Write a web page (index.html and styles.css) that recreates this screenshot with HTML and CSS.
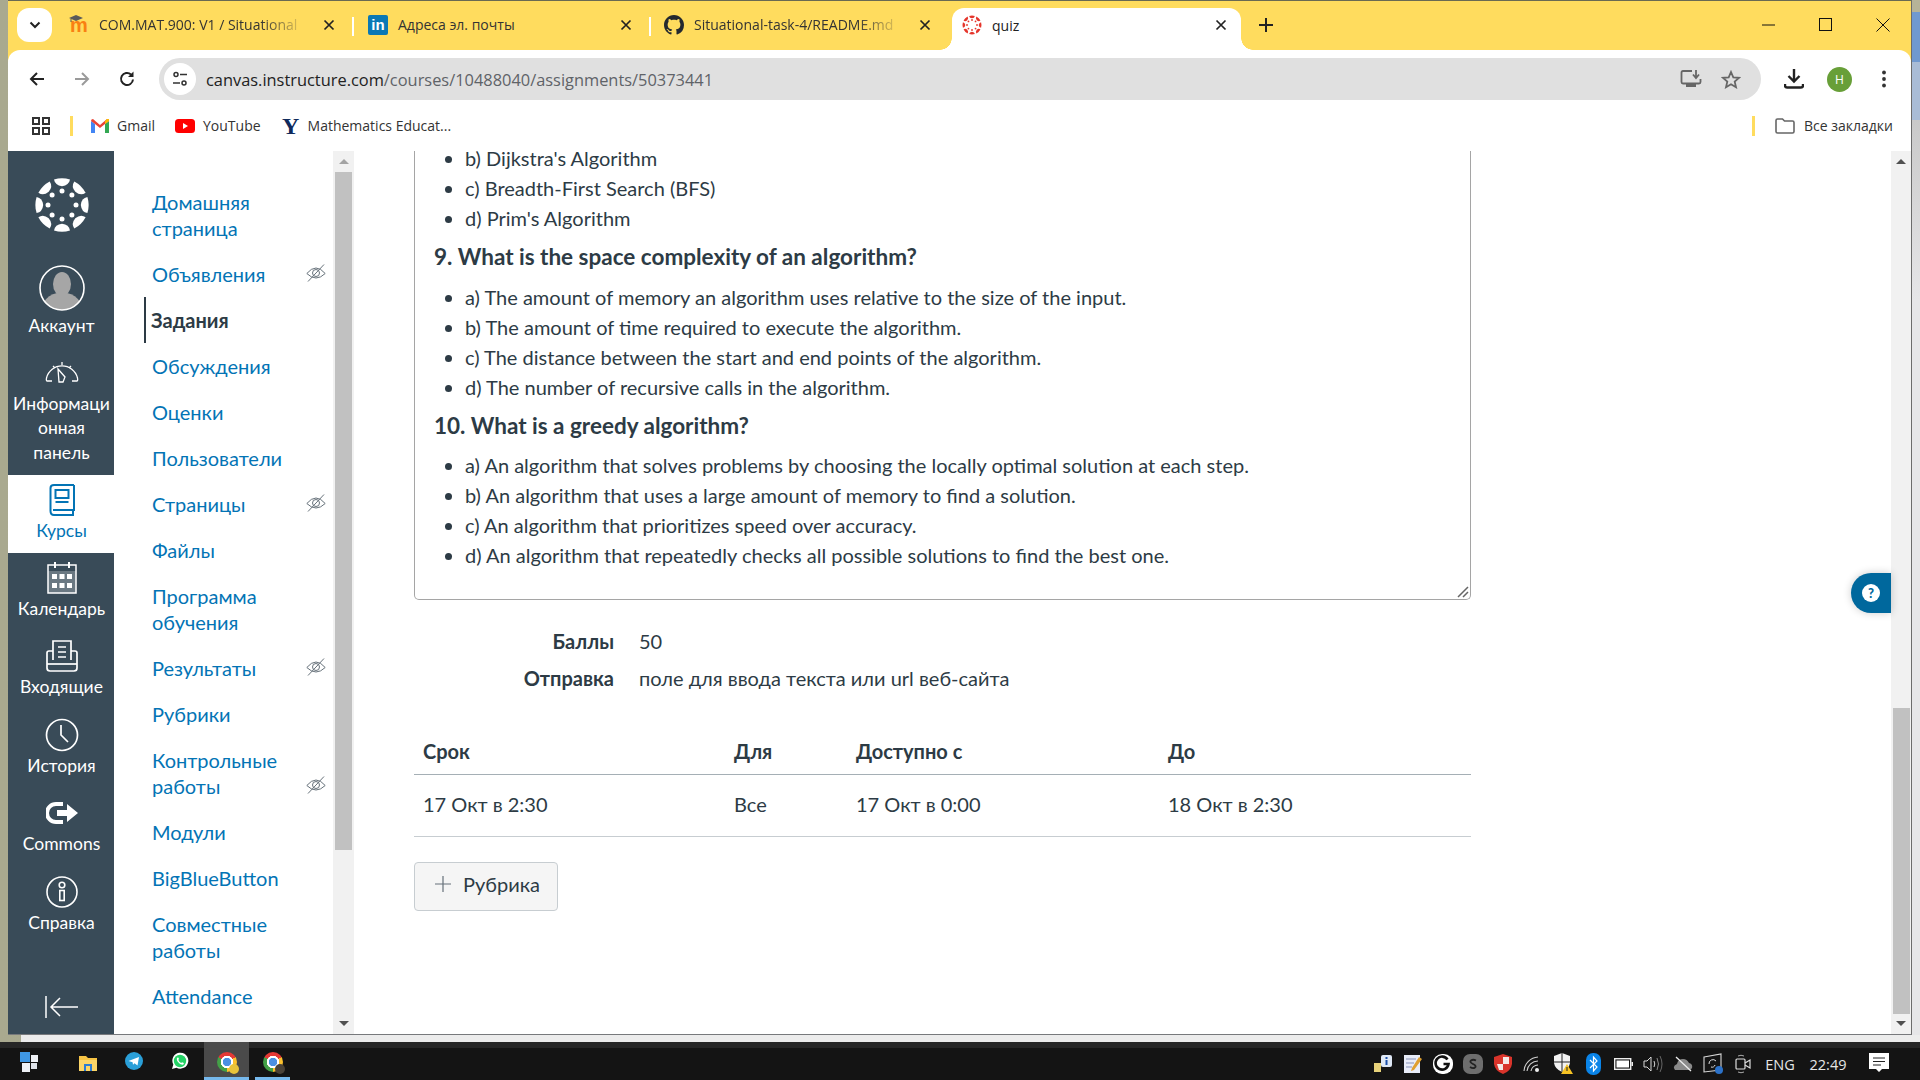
FILE: index.html
```html
<!DOCTYPE html>
<html lang="ru">
<head>
  <meta charset="UTF-8">
  <title>quiz</title>
  <link rel="stylesheet" href="styles.css">
</head>
<body>
  <svg class="defs" width="0" height="0">
    <symbol id="canvas-logo" viewBox="-28 -28 56 56">
      <g id="wedges" fill="currentColor">
        <path id="w" d="M-8-25.4A27 27 0 0 1 8-25.4Q7-19.500 0-18.800Q-7-19.500-8-25.400Z"/>
        <use href="#w" transform="rotate(45)"/><use href="#w" transform="rotate(90)"/><use href="#w" transform="rotate(135)"/>
        <use href="#w" transform="rotate(180)"/><use href="#w" transform="rotate(225)"/><use href="#w" transform="rotate(270)"/><use href="#w" transform="rotate(315)"/>
      </g>
      <g fill="currentColor">
        <circle cx="0" cy="-14" r="2.500"/><circle cx="9.900" cy="-9.900" r="2.500"/><circle cx="14" cy="0" r="2.500"/><circle cx="9.900" cy="9.900" r="2.500"/>
        <circle cx="0" cy="14" r="2.500"/><circle cx="-9.900" cy="9.900" r="2.500"/><circle cx="-14" cy="0" r="2.500"/><circle cx="-9.900" cy="-9.900" r="2.500"/>
      </g>
    </symbol>
    <symbol id="eye-off" viewBox="0 0 20 18">
      <g fill="none" stroke="#66717a" stroke-width="1">
        <path d="M.8 9.500Q10-1.500 19.200 9.500Q10 18.500.8 9.500Z"/>
        <circle cx="10" cy="9" r="3.500"/>
        <path d="M2 17.500 18 .5"/>
      </g>
    </symbol>
    <symbol id="close-x" viewBox="0 0 12 12">
      <path d="M1.500 1.500 10.500 10.500M10.500 1.500 1.500 10.500" fill="none" stroke="currentColor" stroke-width="1.700"/>
    </symbol>
  </svg>

  <div class="top">
    <div class="window">
      <!-- Tabs -->
      <div class="tabstrip">
        <div class="tab-search">
          <svg width="12" height="8" viewBox="0 0 12 8"><path d="M1.500 1.500 6 6 10.500 1.500" fill="none" stroke="#222" stroke-width="2"/></svg>
        </div>
        <div class="tab tab-moodle">
          <span class="favicon moodle">m
            <svg class="moodle-hat" width="14" height="8" viewBox="0 0 14 8"><path d="M0 3 7 0 14 3 7 6Z" fill="#5a5a5a"/><path d="M2 4V7" stroke="#5a5a5a"/></svg>
          </span>
          <span class="tab-title">COM.MAT.900: V1 / Situational</span>
          <svg class="tab-close" width="12" height="12"><use href="#close-x"/></svg>
        </div>
        <div class="tab-sep"></div>
        <div class="tab tab-linkedin">
          <span class="favicon linkedin">in</span>
          <span class="tab-title no-fade">Адреса эл. почты</span>
          <svg class="tab-close" width="12" height="12"><use href="#close-x"/></svg>
        </div>
        <div class="tab-sep"></div>
        <div class="tab tab-github">
          <svg class="favicon" viewBox="0 0 16 16" width="20" height="20"><path fill="#24292f" d="M8 0C3.580 0 0 3.580 0 8c0 3.540 2.290 6.530 5.470 7.590.4.070.55-.17.55-.38 0-.19-.01-.82-.01-1.490-2.010.37-2.530-.49-2.690-.94-.09-.23-.48-.94-.82-1.130-.28-.15-.68-.52-.01-.53.63-.01 1.080.58 1.230.82.72 1.210 1.870.87 2.330.66.070-.52.28-.87.51-1.070-1.780-.2-3.640-.89-3.640-3.950 0-.87.31-1.590.82-2.150-.08-.2-.36-1.020.08-2.120 0 0 .67-.21 2.200.82.64-.18 1.320-.27 2-.27s1.360.09 2 .27c1.530-1.040 2.200-.82 2.200-.82.44 1.100.16 1.920.08 2.120.51.56.82 1.270.82 2.150 0 3.070-1.870 3.750-3.650 3.950.29.25.54.73.54 1.480 0 1.070-.01 1.930-.01 2.200 0 .21.15.46.55.38A8.010 8.010 0 0 0 16 8c0-4.420-3.580-8-8-8z"/></svg>
          <span class="tab-title">Situational-task-4/README.md</span>
          <svg class="tab-close" width="12" height="12"><use href="#close-x"/></svg>
        </div>
        <div class="tab tab-active">
          <svg class="favicon canvas-red" width="20" height="20"><use href="#canvas-logo"/></svg>
          <span class="tab-title no-fade">quiz</span>
          <svg class="tab-close" width="12" height="12"><use href="#close-x"/></svg>
        </div>
        <svg class="new-tab" width="14" height="14" viewBox="0 0 14 14"><path d="M7 0V14M0 7H14" stroke="#222" stroke-width="2"/></svg>
        <div class="win-controls">
          <svg width="14" height="14" viewBox="0 0 14 14"><path d="M0 7H13" stroke="#111" stroke-width="1"/></svg>
          <svg width="14" height="14" viewBox="0 0 14 14"><rect x=".5" y=".5" width="12" height="12" fill="none" stroke="#111"/></svg>
          <svg width="14" height="14" viewBox="0 0 14 14"><path d="M.5.5 13.500 13.500M13.500.5 .5 13.500" stroke="#111" stroke-width="1"/></svg>
        </div>
      </div>

      <!-- Address bar -->
      <div class="toolbar">
        <div class="nav-btns">
          <svg width="18" height="18" viewBox="0 0 18 18"><path d="M16 9H3M9 3 3 9 9 15" fill="none" stroke="#222" stroke-width="2"/></svg>
          <svg width="18" height="18" viewBox="0 0 18 18"><path d="M2 9H15M9 3 15 9 9 15" fill="none" stroke="#9a9a9a" stroke-width="2"/></svg>
          <svg width="18" height="18" viewBox="0 0 18 18"><path d="M15 9.500A6 6 0 1 1 13 4.500" fill="none" stroke="#222" stroke-width="2"/><path d="M15.500 1.500V7H10Z" fill="#222"/></svg>
        </div>
        <div class="omnibox">
          <span class="site-chip">
            <svg width="16" height="16" viewBox="0 0 16 16"><g fill="none" stroke="#333" stroke-width="1.500"><circle cx="4" cy="3.500" r="2"/><path d="M8 3.500H15M1 12H8"/><circle cx="12" cy="12" r="2"/></g></svg>
          </span>
          <span class="url">canvas.instructure.com<span class="url-path">/courses/10488040/assignments/50373441</span></span>
          <svg class="omni-icon" width="22" height="20" viewBox="0 0 22 20"><g fill="none" stroke="#666" stroke-width="1.800"><path d="M12 2H3Q1.500 2 1.500 3.500V13Q1.500 14.500 3 14.500H19Q20.500 14.500 20.500 13V10"/></g><path d="M6 15H16V18H6Z" fill="#666"/><path d="M16 1V8M13 5.500 16 9 19 5.500" fill="none" stroke="#666" stroke-width="1.800"/></svg>
          <svg class="omni-icon" width="20" height="19" viewBox="0 0 20 19"><path d="M10 2 12.300 7.300 18 7.800 13.700 11.600 15 17.200 10 14.200 5 17.200 6.300 11.600 2 7.800 7.700 7.300Z" fill="none" stroke="#666" stroke-width="1.800"/></svg>
        </div>
        <div class="tool-btns">
          <svg width="20" height="20" viewBox="0 0 20 20"><path d="M10 0V12M4.500 7 10 12.500 15.500 7" fill="none" stroke="#222" stroke-width="2.400"/><path d="M1 15V16.500Q1 18.500 3 18.500H17Q19 18.500 19 16.500V15" fill="none" stroke="#222" stroke-width="2.400"/></svg>
          <span class="profile">H</span>
          <svg class="menu-dots" width="6" height="18" viewBox="0 0 6 18"><circle cx="3" cy="2.500" r="1.900" fill="#333"/><circle cx="3" cy="9" r="1.900" fill="#333"/><circle cx="3" cy="15.500" r="1.900" fill="#333"/></svg>
        </div>
      </div>

      <!-- Bookmarks -->
      <div class="bookmarks">
        <svg class="apps" width="18" height="18" viewBox="0 0 18 18"><g fill="none" stroke="#333" stroke-width="2"><rect x="1" y="1" width="6" height="6"/><rect x="11" y="1" width="6" height="6"/><rect x="1" y="11" width="6" height="6"/><rect x="11" y="11" width="6" height="6"/></g></svg>
        <span class="bm-sep"></span>
        <span class="bm bm-gmail">
          <svg width="18" height="14" viewBox="0 0 18 14"><path d="M0 2V14H4V5Z" fill="#4285f4"/><path d="M14 5V14H18V2Z" fill="#34a853"/><path d="M0 2Q0 0 2 0L9 6 16 0Q18 0 18 2L14 5 9 9 4 5Z" fill="#ea4335"/><path d="M14 5 18 2V0H16L14 2Z" fill="#fbbc04"/></svg>
          Gmail
        </span>
        <span class="bm bm-youtube">
          <svg width="20" height="14" viewBox="0 0 20 14"><rect width="20" height="14" rx="3.500" fill="#f00"/><path d="M8 4V10L13 7Z" fill="#fff"/></svg>
          YouTube
        </span>
        <span class="bm bm-yale">
          <span class="yale-y">Y</span>
          Mathematics Educat...
        </span>
        <span class="bm-spacer"></span>
        <span class="bm-sep"></span>
        <span class="bm bm-all">
          <svg width="20" height="16" viewBox="0 0 20 16"><path d="M1 2.500Q1 1 2.500 1H7.500L9.500 3H17.500Q19 3 19 4.500V13.500Q19 15 17.500 15H2.500Q1 15 1 13.500Z" fill="none" stroke="#666" stroke-width="1.600"/></svg>
          Все закладки
        </span>
      </div>

      <!-- Canvas page -->
      <div class="app">
        <nav class="global-nav">
          <div class="gn-logo"><svg width="56" height="56"><use href="#canvas-logo"/></svg></div>
          <a class="gn-item gn-account">
            <span class="avatar">
              <svg width="46" height="46" viewBox="0 0 46 46"><ellipse cx="23" cy="19" rx="9" ry="12" fill="#a6a6a6"/><path d="M5 37Q9 30 18 28H28Q37 30 41 37 34 45 23 45 12 45 5 37Z" fill="#a6a6a6"/><circle cx="23" cy="23" r="22" fill="none" stroke="#fff" stroke-width="1.600"/></svg>
            </span>
            <span>Аккаунт</span>
          </a>
          <a class="gn-item">
            <span class="gn-icon"><svg width="34" height="26" viewBox="0 2 34 26"><g fill="none" stroke="currentColor" stroke-width="1.300"><path d="M7 23H2Q1 23 1.500 20A16 16 0 0 1 32.500 20Q33 23 32 23H27"/><path d="M13 11 20 19 18 24H14Z"/><path d="M17 4V7M8 8 10 10M26 8 24 10"/></g></svg></span>
            <span>Информаци<br>онная<br>панель</span>
          </a>
          <a class="gn-item gn-active">
            <span class="gn-icon"><svg width="26" height="32" viewBox="0 0 26 32"><g fill="none" stroke="currentColor" stroke-width="2"><path d="M25 1H5Q1.500 1 1.500 4V27Q1.500 31 5 31H24V26M4 26H25V1"/><rect x="6.500" y="6" width="13" height="8"/><path d="M6.500 18H19.500"/></g></svg></span>
            <span>Курсы</span>
          </a>
          <a class="gn-item">
            <span class="gn-icon"><svg width="30" height="33" viewBox="0 0 30 33"><path d="M1 4H29V32H1Z" fill="none" stroke="currentColor" stroke-width="1.500"/><path d="M1 10H29V32H1Z" fill="currentColor" fill-opacity=".25"/><path d="M8 1V7M22 1V7" stroke="currentColor" stroke-width="2"/><g fill="currentColor"><rect x="5" y="13" width="5" height="5"/><rect x="12.500" y="13" width="5" height="5"/><rect x="20" y="13" width="5" height="5"/><rect x="5" y="22" width="5" height="5"/><rect x="12.500" y="22" width="5" height="5"/><rect x="20" y="22" width="5" height="5"/></g></svg></span>
            <span>Календарь</span>
          </a>
          <a class="gn-item">
            <span class="gn-icon"><svg width="32" height="32" viewBox="0 0 32 32"><g fill="none" stroke="currentColor" stroke-width="1.700"><path d="M7 20V1H25V20"/><path d="M12 7H20M12 12H20M12 17H20"/><path d="M7 11H3Q1 11 1 13V28Q1 31 4 31H28Q31 31 31 28V13Q31 11 29 11H25"/><path d="M1 24H31"/></g></svg></span>
            <span>Входящие</span>
          </a>
          <a class="gn-item">
            <span class="gn-icon"><svg width="34" height="34" viewBox="0 0 34 34"><g fill="none" stroke="currentColor" stroke-width="1.700"><circle cx="17" cy="17" r="15.500"/><path d="M16 7V17L23 24"/></g></svg></span>
            <span>История</span>
          </a>
          <a class="gn-item">
            <span class="gn-icon"><svg width="32" height="24" viewBox="0 0 32 24"><path d="M17 5V1H10A11 11 0 0 0 10 23H17V19H10A7 7 0 0 1 10 5Z" fill="currentColor"/><path d="M21 3 32 12 21 21V15H11V9H21Z" fill="currentColor"/></svg></span>
            <span>Commons</span>
          </a>
          <a class="gn-item">
            <span class="gn-icon"><svg width="32" height="32" viewBox="0 0 32 32"><g fill="none" stroke="currentColor" stroke-width="1.600"><circle cx="16" cy="16" r="15"/><circle cx="16" cy="9" r="2.800"/><rect x="13.800" y="14.500" width="4.400" height="10"/></g></svg></span>
            <span>Справка</span>
          </a>
          <div class="gn-collapse">
            <svg width="34" height="24" viewBox="0 0 34 24"><path d="M1 1V23" stroke="currentColor" stroke-width="1.500"/><path d="M33 12H6M15 3 6 12 15 21" fill="none" stroke="currentColor" stroke-width="1.500"/></svg>
          </div>
        </nav>

        <aside class="course-nav">
          <ul class="course-links">
            <li><a>Домашняя<br>страница</a></li>
            <li><a>Объявления</a><svg class="eye" width="20" height="18"><use href="#eye-off"/></svg></li>
            <li class="current"><a>Задания</a></li>
            <li><a>Обсуждения</a></li>
            <li><a>Оценки</a></li>
            <li><a>Пользователи</a></li>
            <li><a>Страницы</a><svg class="eye" width="20" height="18"><use href="#eye-off"/></svg></li>
            <li><a>Файлы</a></li>
            <li><a>Программа<br>обучения</a></li>
            <li><a>Результаты</a><svg class="eye" width="20" height="18"><use href="#eye-off"/></svg></li>
            <li><a>Рубрики</a></li>
            <li><a>Контрольные<br>работы</a><svg class="eye" width="20" height="18"><use href="#eye-off"/></svg></li>
            <li><a>Модули</a></li>
            <li><a>BigBlueButton</a></li>
            <li><a>Совместные<br>работы</a></li>
            <li><a>Attendance</a></li>
          </ul>
          <div class="scrollbar scrollbar-nav">
            <span class="arrow-up"></span>
            <span class="thumb"></span>
            <span class="arrow-down"></span>
          </div>
        </aside>

        <main class="content">
          <div class="description">
            <ul class="answers first">
              <li>b) Dijkstra's Algorithm</li>
              <li>c) Breadth-First Search (BFS)</li>
              <li>d) Prim's Algorithm</li>
            </ul>
            <h3>9. What is the space complexity of an algorithm?</h3>
            <ul class="answers">
              <li>a) The amount of memory an algorithm uses relative to the size of the input.</li>
              <li>b) The amount of time required to execute the algorithm.</li>
              <li>c) The distance between the start and end points of the algorithm.</li>
              <li>d) The number of recursive calls in the algorithm.</li>
            </ul>
            <h3 class="q10">10. What is a greedy algorithm?</h3>
            <ul class="answers">
              <li>a) An algorithm that solves problems by choosing the locally optimal solution at each step.</li>
              <li>b) An algorithm that uses a large amount of memory to find a solution.</li>
              <li>c) An algorithm that prioritizes speed over accuracy.</li>
              <li>d) An algorithm that repeatedly checks all possible solutions to find the best one.</li>
            </ul>
            <svg class="grip" width="12" height="12" viewBox="0 0 12 12"><path d="M1 11 11 1M6 11 11 6" stroke="#666" stroke-width="1.500"/></svg>
          </div>

          <dl class="fields">
            <dt>Баллы</dt><dd>50</dd>
            <dt>Отправка</dt><dd>поле для ввода текста или url веб-сайта</dd>
          </dl>

          <table class="dates">
            <thead>
              <tr><th class="c1">Срок</th><th class="c2">Для</th><th class="c3">Доступно с</th><th>До</th></tr>
            </thead>
            <tbody>
              <tr><td>17 Окт в 2:30</td><td>Все</td><td>17 Окт в 0:00</td><td>18 Окт в 2:30</td></tr>
            </tbody>
          </table>

          <button class="rubric-btn">
            <svg width="16" height="16" viewBox="0 0 16 16"><path d="M8 0V16M0 8H16" stroke="#66717a" stroke-width="1.200"/></svg>
            Рубрика
          </button>

          <div class="help-tab"><span class="help-dot">?</span></div>
        </main>

        <div class="scrollbar scrollbar-main">
          <span class="arrow-up"></span>
          <span class="thumb"></span>
          <span class="arrow-down"></span>
        </div>
      </div>
    </div>
    <div class="edge"></div>
  </div>

  <div class="behind"></div>

  <!-- Windows taskbar -->
  <footer class="taskbar">
    <svg class="start" width="20" height="20" viewBox="0 0 20 20"><rect width="10" height="10" fill="#3f97e4"/><rect x="11" y="3" width="7" height="7" fill="#eef1f6"/><rect x="2" y="11" width="8" height="9" fill="#eef1f6"/><rect x="11" y="11" width="6" height="6" fill="#dfe3ea"/></svg>
    <svg class="tb-explorer" width="18" height="16" viewBox="0 0 18 16"><path d="M0 1H7L9 3H18V16H0Z" fill="#f6c445"/><path d="M0 5H18V16H0Z" fill="#fbd568"/><path d="M5 9H13V16H11V11H7V16H5Z" fill="#2b7cd3"/></svg>
    <svg class="tb-telegram" width="18" height="18" viewBox="0 0 18 18"><circle cx="9" cy="9" r="9" fill="#2a9fd8"/><path d="M3.500 9 14 5 12.500 13.500 9.500 11.300 8 12.800 7.600 10.300Z" fill="#fff"/></svg>
    <svg class="tb-whatsapp" width="18" height="18" viewBox="0 0 18 18"><path d="M1 17 2.300 12.500A8 8 0 1 1 5.500 15.700Z" fill="#fff"/><circle cx="9" cy="9" r="6.200" fill="#25d366"/><path d="M6.500 5.500Q5 7 6.800 9.700T11.500 12.700Q13 12.500 12.800 11L11 10.200 10.200 11Q8 10 7.300 7.800L8 7 7.300 5.500Z" fill="#fff"/></svg>
    <span class="tb-app tb-app-active"><span class="chrome"><span class="chrome-badge yellow"></span></span></span>
    <span class="tb-app tb-app-open"><span class="chrome"><span class="chrome-badge dark"></span></span></span>
    <span class="tb-spacer"></span>
    <div class="tray">
      <svg width="20" height="20" viewBox="0 0 20 20"><path d="M1 9H8V18H1Z" fill="#e8d27a"/><rect x="8" y="1" width="11" height="12" rx="2" fill="#dfe8f5"/><rect x="12.500" y="3" width="2" height="2" fill="#1b4fa8"/><rect x="12.500" y="6" width="2" height="5" fill="#1b4fa8"/></svg>
      <svg width="20" height="20" viewBox="0 0 20 20"><rect x="1" y="1" width="16" height="18" fill="#e8ecf8"/><path d="M3 5H13M3 9H11M3 13H9" stroke="#8792b8"/><path d="M16 3 19 5 11 16 8 17 9 14Z" fill="#e0a030"/></svg>
      <svg width="20" height="20" viewBox="0 0 20 20"><rect width="20" height="20" rx="9" fill="#fff"/><path d="M14.500 5.500A6.500 6.500 0 1 0 15.500 10H10.500" fill="none" stroke="#111" stroke-width="2.600"/></svg>
      <svg width="20" height="22" viewBox="0 0 20 22"><rect y="1" width="20" height="20" rx="7" fill="#6e6e6e"/><path d="M13 7.500Q10 6 8 7.500T10 11 12 14.500 7 14" fill="none" stroke="#222" stroke-width="1.800"/></svg>
      <svg width="18" height="20" viewBox="0 0 18 20"><path d="M0 3 9 0 18 3V10Q17 17 9 20 1 17 0 10Z" fill="#d9342b"/><path d="M9 3H15V10H9ZM3 10H9V16H5Z" fill="#f4e9e6"/></svg>
      <svg width="20" height="18" viewBox="0 0 20 18"><g fill="none" stroke="#cfcfcf" stroke-width="1.100"><path d="M1 16A15 15 0 0 1 15 2"/><path d="M4 16A11 11 0 0 1 15 6"/><path d="M8 16A7 7 0 0 1 15 10"/></g><circle cx="14" cy="15" r="2" fill="#eee"/></svg>
      <svg width="20" height="22" viewBox="0 0 20 22"><path d="M1 3 9 0 17 3V10Q16 16 9 19 2 16 1 10Z" fill="#f2f2f2"/><path d="M9 0V19M1 9H17" stroke="#222"/><path d="M14 11 20 21H8Z" fill="#f6c324"/><path d="M14 14V18" stroke="#222"/></svg>
      <svg width="15" height="22" viewBox="0 0 15 22"><rect width="15" height="22" rx="7" fill="#0a84e8"/><path d="M4 7 11 14 7.500 18V4L11 8 4 15" fill="none" stroke="#fff" stroke-width="1.200"/></svg>
      <svg width="19" height="12" viewBox="0 0 19 12"><rect x=".7" y=".7" width="16" height="10.600" fill="none" stroke="#eee" stroke-width="1.400"/><rect x="2.500" y="2.500" width="12.500" height="7" fill="#fff"/><rect x="17.500" y="4" width="1.500" height="4" fill="#eee"/></svg>
      <svg width="20" height="18" viewBox="0 0 20 18"><g fill="none" stroke="#d8d8d8" stroke-width="1"><path d="M1 6H4L8 2V16L4 12H1Z"/><path d="M11 6Q12.500 9 11 12"/><path d="M14 3Q17 9 14 15" stroke="#8a8a8a"/><path d="M17 1Q21 9 17 17" stroke="#666"/></g></svg>
      <svg width="20" height="16" viewBox="0 0 20 16"><path d="M2 14Q-1 10 4 8 5 3 10 3 14 3 16 7 20 8 19 12 18 14 16 14Z" fill="#8a8a8a"/><path d="M3 1 18 15" stroke="#eee" stroke-width="1.300"/></svg>
      <svg width="22" height="22" viewBox="0 0 22 22"><path d="M2 4 19 1V17L2 19Z" fill="none" stroke="#d8d8d8" stroke-width="1.100"/><path d="M7 11A4 4 0 0 1 14 8M13 12A3 3 0 0 1 9 14" fill="none" stroke="#ddd"/><circle cx="17" cy="17" r="4" fill="#2c72c9"/></svg>
      <svg width="16" height="20" viewBox="0 0 16 20"><rect x="1" y="5" width="9" height="10" rx="1" fill="none" stroke="#ddd" stroke-width="1.200"/><path d="M10 9 15 6V14L10 11" fill="none" stroke="#ddd" stroke-width="1.200"/><path d="M3 2Q6 .5 9 2M3 18Q6 19.500 9 18" fill="none" stroke="#aaa"/></svg>
      <span class="tray-text">ENG</span>
      <span class="tray-text">22:49</span>
      <svg width="20" height="22" viewBox="0 0 20 22"><path d="M0 0H20V16H13L10 19 7 16H0Z" fill="#fff"/><path d="M4 5H16M4 8.500H16M4 12H12" stroke="#222"/></svg>
    </div>
  </footer>
</body>
</html>
```

FILE: styles.css
```css
* {
  box-sizing: border-box;
}

html, body {
  margin: 0;
  height: 100%;
  overflow: hidden;
}

body {
  width: 1920px;
  height: 1080px;
  background: linear-gradient(90deg, #a9a98f, #b5b498 50%, #9fa085);
  font-family: Lato, "Noto Sans", sans-serif;
  color: #2d3b45;
  display: flex;
  flex-direction: column;
}

.defs {
  position: absolute;
}

.top {
  display: flex;
  height: 1035px;
}

.window {
  width: 1904px;
  margin-left: 8px;
  height: 1035px;
  display: flex;
  flex-direction: column;
  background: #ffdc5e;
  border-top: 1px solid #6a6a52;
  border-right: 1px solid #6c6c6c;
  border-bottom: 1px solid #77797c;
}

.edge {
  flex: 1;
  background: linear-gradient(180deg, #b6b398 0, #b6b398 12px, #7099cf 12px, #7099cf 62px, #a9bcd6 62px, #a9bcd6 120px, #c9c9c9 120px, #e6e6e8 300px);
}

/* Tabs */
.tabstrip {
  height: 49px;
  flex: none;
  background: #ffdc5e;
  display: flex;
  align-items: flex-end;
  padding-left: 9px;
  font-family: "Open Sans", sans-serif;
  font-size: 14px;
  color: #333;
}

.tab-search {
  width: 35px;
  height: 34px;
  margin-bottom: 8px;
  margin-right: 8px;
  background: #fff;
  border-radius: 12px;
  display: flex;
  align-items: center;
  justify-content: center;
}

.tab {
  height: 49px;
  display: flex;
  align-items: center;
  padding-bottom: 2px;
  flex: none;
}

.tab-moodle {
  width: 292px;
  padding-left: 9px;
  padding-right: 17px;
}

.tab-linkedin {
  width: 295px;
  padding-left: 14px;
  padding-right: 17px;
}

.tab-github {
  width: 301px;
  padding-left: 13px;
  padding-right: 21px;
}

.tab-active {
  width: 289px;
  height: 42px;
  padding: 0 14px 8px 10px;
  background: #fff;
  border-radius: 12px 12px 0 0;
  color: #222;
  position: relative;
}

/* curved feet of the active tab */
.tab-active::before,
.tab-active::after {
  content: "";
  position: absolute;
  bottom: 0;
  width: 12px;
  height: 12px;
}

.tab-active::before {
  left: -12px;
  background: radial-gradient(circle at 0 0, transparent 11.500px, #fff 12px);
}

.tab-active::after {
  right: -12px;
  background: radial-gradient(circle at 100% 0, transparent 11.500px, #fff 12px);
}

.tab-sep {
  width: 2px;
  height: 19px;
  margin-bottom: 14px;
  background: #fff;
  flex: none;
}

.favicon {
  width: 20px;
  height: 20px;
  flex: none;
}

.moodle {
  color: #f98012;
  font-family: "Liberation Sans", sans-serif;
  font-size: 20px;
  font-weight: 700;
  line-height: 20px;
  text-align: center;
  position: relative;
}

.moodle-hat {
  position: absolute;
  left: 0;
  top: 0;
}

.linkedin {
  background: #0a78b5;
  border-radius: 2px;
  color: #fff;
  font-family: "Liberation Sans", sans-serif;
  font-size: 15px;
  font-weight: 700;
  line-height: 20px;
  text-align: center;
}

.canvas-red {
  color: #e5352b;
}

.tab-title {
  flex: 1;
  min-width: 0;
  margin-left: 10px;
  white-space: nowrap;
  -webkit-mask-image: linear-gradient(90deg, #000 72%, transparent 93%);
  mask-image: linear-gradient(90deg, #000 72%, transparent 93%);
}

.no-fade {
  -webkit-mask-image: none;
  mask-image: none;
}

.tab-close {
  flex: none;
  color: #222;
}

.new-tab {
  margin: 0 0 18px 18px;
}

.win-controls {
  margin-left: auto;
  height: 49px;
  display: flex;
  align-items: center;
  gap: 43px;
  padding-right: 21px;
  padding-bottom: 2px;
}

/* Address bar */
.toolbar {
  height: 50px;
  flex: none;
  display: flex;
  align-items: center;
  padding-top: 8px;
  background: #fff;
  border-radius: 12px 12px 0 0;
}

.nav-btns {
  width: 151px;
  padding-left: 20px;
  display: flex;
  gap: 27px;
}

.omnibox {
  width: 1602px;
  height: 42px;
  background: #e0e0e0;
  border-radius: 21px;
  display: flex;
  align-items: center;
  padding: 0 20px 0 5px;
}

.site-chip {
  width: 32px;
  height: 32px;
  border-radius: 50%;
  background: #fff;
  display: flex;
  align-items: center;
  justify-content: center;
  flex: none;
}

.url {
  flex: 1;
  margin-left: 10px;
  font-family: "Open Sans", sans-serif;
  font-size: 16.400px;
  color: #222;
  white-space: nowrap;
}

.url-path {
  color: #5f6368;
}

.omni-icon {
  flex: none;
  margin-left: 19px;
}

.tool-btns {
  flex: 1;
  display: flex;
  align-items: center;
  padding-left: 23px;
}

.profile {
  width: 25px;
  height: 25px;
  margin-left: 23px;
  border-radius: 50%;
  background: #689f38;
  color: #fff;
  font-family: "Open Sans", sans-serif;
  font-size: 12px;
  line-height: 25px;
  text-align: center;
}

.menu-dots {
  margin-left: 29px;
}

/* Bookmarks */
.bookmarks {
  height: 51px;
  flex: none;
  display: flex;
  align-items: center;
  padding: 0 18px 0 24px;
  font-family: "Open Sans", sans-serif;
  font-size: 14px;
  color: #333;
  background: #fff;
}

.bm-sep {
  width: 3px;
  height: 20px;
  margin-left: 20px;
  background: #ffdc5e;
  flex: none;
}

.bm {
  display: flex;
  align-items: center;
  gap: 8px;
  white-space: nowrap;
}

.bm-gmail {
  margin-left: 18px;
}

.bm-youtube {
  margin-left: 20px;
}

.bm-yale {
  margin-left: 21px;
}

.yale-y {
  width: 18px;
  color: #0f2a5c;
  font-family: "Liberation Serif", serif;
  font-size: 24px;
  font-weight: 700;
  line-height: 22px;
  text-align: center;
}

.bm-spacer {
  flex: 1;
}

.bm-all {
  margin-left: 20px;
  gap: 9px;
}

/* Canvas page */
.app {
  flex: 1;
  min-height: 0;
  display: flex;
  overflow: hidden;
  background: #fff;
}

.global-nav {
  width: 106px;
  flex: none;
  padding-left: 1px;
  background: #394b58;
  color: #fff;
  display: flex;
  flex-direction: column;
  font-size: 17.500px;
  line-height: 24.500px;
  text-align: center;
}

.gn-logo {
  height: 105px;
  padding-top: 26px;
}

.gn-item {
  display: block;
  padding: 6px 0 10px;
}

.gn-icon {
  display: flex;
  height: 36px;
  margin-bottom: 2px;
  padding-top: 2px;
  align-items: center;
  justify-content: center;
}

.gn-account {
  padding: 9px 0 9px;
}

.avatar {
  display: block;
  height: 46px;
  margin-bottom: 3px;
}

.gn-active {
  margin-left: -1px;
  padding-left: 1px;
  padding-bottom: 9px;
  background: #fff;
  color: #0374b5;
}

.gn-collapse {
  margin-top: auto;
  padding-bottom: 9px;
}

.course-nav {
  width: 240px;
  flex: none;
  display: flex;
}

.course-links {
  width: 219px;
  margin: 0;
  padding: 28px 0 0 30px;
  list-style: none;
  font-size: 20px;
  line-height: 26px;
  color: #0374b5;
}

.course-links li {
  display: flex;
  justify-content: space-between;
  align-items: flex-end;
  padding: 10px 7px 10px 6px;
  border-left: 2px solid transparent;
}

.course-links .current {
  padding-left: 5px;
  border-left-color: #2d3b45;
  color: #2d3b45;
  font-weight: 700;
}

.eye {
  flex: none;
  margin-bottom: 5px;
}

.scrollbar {
  width: 21px;
  flex: none;
  background: #f1f1f1;
  display: flex;
  flex-direction: column;
  align-items: center;
}

.scrollbar-main {
  width: 20px;
}

.arrow-up,
.arrow-down {
  display: block;
  width: 0;
  height: 0;
  border-left: 5px solid transparent;
  border-right: 5px solid transparent;
}

.arrow-up {
  margin: 8px 0;
  border-bottom: 5px solid #a3a3a3;
}

.arrow-down {
  margin: auto 0 8px;
  border-top: 5px solid #505050;
}

.thumb {
  display: block;
  width: 17px;
  background: #c1c1c1;
}

.scrollbar-nav .thumb {
  height: 678px;
}

.scrollbar-main .thumb {
  margin-top: 536px;
  height: 306px;
}

.scrollbar-main .arrow-up {
  border-bottom-color: #505050;
}

.content {
  flex: 1;
  min-width: 0;
  padding-left: 60px;
  padding-right: 60px;
  position: relative;
  font-size: 20px;
  line-height: 30px;
}

.description {
  width: 1057px;
  height: 449px;
  padding-left: 18px;
  border: 1px solid #a5a5a5;
  border-top: 0;
  border-radius: 0 0 5px 5px;
  position: relative;
  overflow: hidden;
}

.description h3 {
  margin: 9px 0 10px 1px;
  font-size: 22.500px;
  line-height: 30px;
  font-weight: 700;
}

.description .q10 {
  margin-bottom: 9px;
}

.answers {
  margin: 0;
  padding-left: 32px;
}

.first {
  margin-top: -8px;
}

.grip {
  position: absolute;
  right: 1px;
  bottom: 1px;
}

.fields {
  display: grid;
  grid-template-columns: 200px 1fr;
  column-gap: 25px;
  margin: 23px 0 0;
  line-height: 37px;
}

.fields dt {
  font-weight: 700;
  text-align: right;
}

.fields dd {
  margin: 0;
}

.dates {
  width: 1057px;
  margin-top: 33px;
  border-collapse: collapse;
  table-layout: fixed;
}

.dates th {
  height: 44px;
  padding: 0 9px 2px;
  text-align: left;
  font-weight: 700;
  border-bottom: 1px solid #a5afb5;
}

.dates td {
  height: 62px;
  padding: 0 9px 2px;
  border-bottom: 1px solid #c7cdd1;
}

.c1 {
  width: 311px;
}

.c2 {
  width: 122px;
}

.c3 {
  width: 312px;
}

.rubric-btn {
  display: flex;
  align-items: center;
  gap: 12px;
  width: 144px;
  height: 49px;
  margin-top: 25px;
  padding: 0 0 4px 20px;
  background: #f5f5f5;
  border: 1px solid #c7cdd1;
  border-radius: 4px;
  font: inherit;
  color: #2d3b45;
}

.help-tab {
  position: absolute;
  right: 0;
  top: 422px;
  width: 40px;
  height: 40px;
  border-radius: 20px 0 0 20px;
  background: #00689d;
  box-shadow: 0 0 8px rgba(0, 0, 0, 0.2);
  display: flex;
  align-items: center;
  padding-left: 11px;
}

.help-dot {
  width: 18px;
  height: 18px;
  border-radius: 50%;
  background: #fff;
  color: #00689d;
  font-size: 13px;
  font-weight: 900;
  line-height: 18px;
  text-align: center;
}

/* Desktop behind the window */
.behind {
  height: 7px;
  margin-left: 21px;
  background: #ececec;
  flex: none;
}

.taskbar {
  height: 38px;
  flex: none;
  display: flex;
  align-items: flex-end;
  background: linear-gradient(180deg, #262626 0, #262626 6px, #141414 6px);
}

.taskbar svg {
  flex: none;
}

.start {
  margin: 0 0 8px 20px;
}

.tb-explorer {
  margin: 0 0 9px 39px;
}

.tb-telegram {
  margin: 0 0 10px 28px;
}

.tb-whatsapp {
  margin: 0 0 10px 28px;
}

.tb-app {
  height: 38px;
  display: flex;
  align-items: center;
  justify-content: center;
  padding-top: 4px;
}

.tb-app-active {
  width: 45px;
  margin-left: 15px;
  background: #4a4a4a;
  border-bottom: 3px solid #76b9ed;
}

.tb-app-open {
  width: 35px;
  margin-left: 6px;
  border-bottom: 3px solid #76b9ed;
}

.chrome {
  display: block;
  position: relative;
  width: 20px;
  height: 20px;
  border-radius: 50%;
  background:
    radial-gradient(circle, #4a90e2 0, #4a90e2 4px, #fff 4.500px, #fff 6px, transparent 6.500px),
    conic-gradient(from -60deg, #e53935 0 120deg, #fbc02d 120deg 240deg, #43a047 240deg);
}

.chrome-badge {
  position: absolute;
  right: -2px;
  bottom: -2px;
  width: 10px;
  height: 10px;
  border-radius: 50%;
}

.yellow {
  background: #e8c33a;
}

.dark {
  background: #4a4238;
}

.tb-spacer {
  flex: 1;
}

.tray {
  height: 32px;
  display: grid;
  grid-template-columns: repeat(13, 30px) 44px 52px 50px;
  justify-items: center;
  align-items: center;
  margin-right: 16px;
  color: #e6e6e6;
}

.tray-text {
  font-family: "Open Sans", sans-serif;
  font-size: 14.500px;
}
```
